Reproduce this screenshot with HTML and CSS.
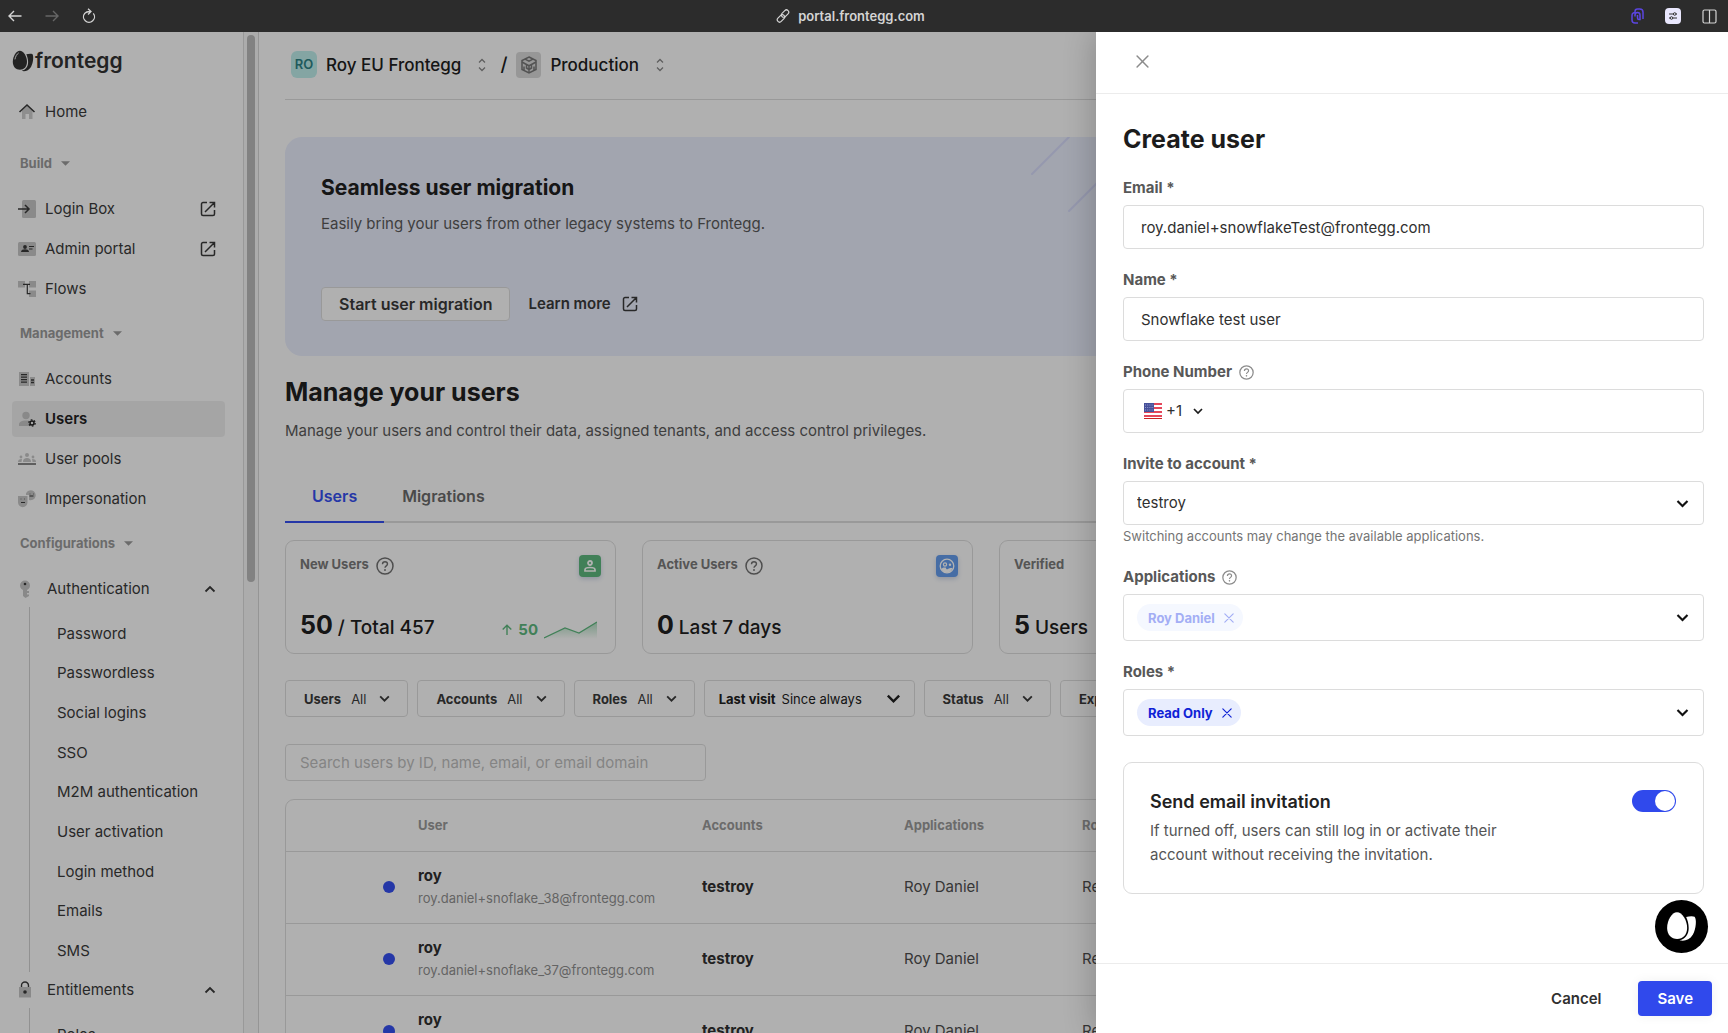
FILE: index.html
```html
<!DOCTYPE html>
<html lang="en">
<head>
<meta charset="utf-8">
<title>Create user - Frontegg portal</title>
<link rel="stylesheet" href="styles.css">
</head>
<body>
<svg class="sprite" aria-hidden="true">
  <symbol id="chev-down" viewBox="0 0 12 12"><path d="M2 4l4 4 4-4" fill="none" stroke="currentColor" stroke-width="1.700"/></symbol>
  <symbol id="chev-up" viewBox="0 0 12 12"><path d="M1.500 8.500l4.500-4.500 4.500 4.500" fill="none" stroke="currentColor" stroke-width="1.800"/></symbol>
  <symbol id="caret" viewBox="0 0 10 5"><path d="M0 0h10L5 5z" fill="currentColor"/></symbol>
  <symbol id="updown" viewBox="0 0 8 14"><path d="M1 4.500l3-3 3 3M1 9.500l3 3 3-3" fill="none" stroke="currentColor" stroke-width="1.300"/></symbol>
  <symbol id="close" viewBox="0 0 12 12"><path d="M1 1l10 10M11 1L1 11" fill="none" stroke="currentColor" stroke-width="1.400" stroke-linecap="round"/></symbol>
  <symbol id="external" viewBox="0 0 16 16"><path d="M7 1.500H3A1.500 1.500 0 0 0 1.500 3v10A1.500 1.500 0 0 0 3 14.500h10a1.500 1.500 0 0 0 1.500-1.500V9M9.500 1.500h5v5M14.500 1.500L5 11" fill="none" stroke="currentColor" stroke-width="1.500"/></symbol>
  <symbol id="help" viewBox="0 0 18 18"><circle cx="9" cy="9" r="8" fill="none" stroke="currentColor" stroke-width="1.500"/><path d="M6.500 7.200C6.500 5.700 7.600 4.700 9 4.700s2.500 1 2.500 2.300c0 1.800-2.500 1.900-2.500 3.800" fill="none" stroke="currentColor" stroke-width="1.400"/><circle cx="9" cy="13" r=".95" fill="currentColor"/></symbol>
  <symbol id="egg" viewBox="0 0 22 22"><path d="M7.800.800C11.500.800 15 6.500 15 11.800c0 5-3 8-7.100 8S.800 16.800.800 11.800C.800 6.500 4.200 .800 7.800.800z" fill="currentColor"/><path d="M14.300 4.300c1.900-.6 4.700-.9 6-.2 1.500 1.500 1.200 8.600-1.300 12.800-2.200 3.700-6.200 4.900-9.400 3.900 4.200-1 6.500-4.300 6.500-8.800 0-2.800-.8-5.500-1.800-7.700z" fill="currentColor"/><path class="egg-shine" d="M3 9c.5-2.600 1.800-4.900 3.400-5.900" fill="none" stroke-width=".9" stroke-linecap="round"/></symbol>
</svg>

<header class="topbar">
  <div class="topbar-left">
    <button class="bar-btn" type="button" aria-label="Back"><svg width="14" height="14" viewBox="0 0 14 14"><path d="M13.500 7H1M6 2L1 7l5 5" fill="none" stroke="currentColor" stroke-width="1.400"/></svg></button>
    <button class="bar-btn bar-off" type="button" aria-label="Forward"><svg width="14" height="14" viewBox="0 0 14 14"><path d="M.500 7H13M8 2l5 5-5 5" fill="none" stroke="currentColor" stroke-width="1.400"/></svg></button>
    <button class="bar-btn" type="button" aria-label="Reload"><svg width="14" height="16" viewBox="0 0 14 16"><path d="M2.700 5.300A5.500 5.500 0 1 0 11.300 5.300M2.700 5.300C3.800 4 5.200 3.400 8.500 3.500M6 .700l3 2.900-3 2.900" fill="none" stroke="currentColor" stroke-width="1.300"/></svg></button>
  </div>
  <div class="address">
    <svg width="14" height="14" viewBox="0 0 14 14"><g fill="none" stroke="currentColor" stroke-width="1.200"><rect x="4.800" y="2.300" width="8.500" height="4.600" rx="2.300" transform="rotate(-45 9 4.600)"/><rect x=".7" y="7.100" width="8.500" height="4.600" rx="2.300" transform="rotate(-45 5 9.400)"/></g></svg>
    <span>portal.frontegg.com</span>
  </div>
  <div class="topbar-right">
    <button class="bar-btn clip" type="button" aria-label="Clipboard extension"><svg width="13" height="16" viewBox="0 0 13 16"><path d="M4 4V3.500A2.500 2.500 0 0 1 6.500 1h2.300A3.200 3.200 0 0 1 12 4.200V11M4 8.500V7a2.500 2.500 0 0 1 5 0v4.500H8a1.500 1.500 0 0 1-1.500-1.500V7M4.500 4.500C2 4.500 1 5.500 1 7.500V12a3 3 0 0 0 3 3h3" fill="none" stroke="currentColor" stroke-width="1.500"/></svg></button>
    <button class="bar-btn tile" type="button" aria-label="Settings extension"><svg width="16" height="16" viewBox="0 0 16 16"><path d="M4 6h4M11 6h1M4 10h1M8 10h4" stroke="currentColor" stroke-width="1.200"/><circle cx="9.700" cy="6" r="1.300" fill="none" stroke="currentColor"/><circle cx="6.500" cy="10" r="1.300" fill="none" stroke="currentColor"/></svg></button>
    <button class="bar-btn" type="button" aria-label="Split view"><svg width="15" height="15" viewBox="0 0 15 15"><rect x="1" y="1" width="13" height="13" rx="1.500" fill="none" stroke="currentColor" stroke-width="1.200"/><path d="M7.500 1v13" stroke="currentColor" stroke-width="1.200"/></svg></button>
  </div>
</header>

<div class="stage">
  <div class="shell">
    <aside class="sidebar">
      <a class="logo" href="#"><svg width="22" height="22"><use href="#egg"/></svg><span>frontegg</span></a>
      <nav class="nav">
        <a class="nav-item" href="#"><svg class="ico" viewBox="0 0 18 18"><path d="M4 7.500L9 3l5.500 4.500V16H11v-5H7.500v5H4z" fill="#ccc"/><path d="M1.500 9L9 2l7.500 7" fill="none" stroke="#3a3a3a" stroke-width="1.600"/></svg><span>Home</span></a>
        <button class="nav-label nav-first" type="button">Build <svg width="9" height="5"><use href="#caret"/></svg></button>
        <a class="nav-item" href="#"><svg class="ico" viewBox="0 0 18 18"><rect x="4" y="0" width="14" height="18" rx="1.500" fill="#c6c6c6"/><path d="M0 9h10.500M7 5l4 4-4 4" fill="none" stroke="#3a3a3a" stroke-width="1.500"/></svg><span>Login Box</span><svg class="ext"><use href="#external"/></svg></a>
        <a class="nav-item" href="#"><svg class="ico" viewBox="0 0 18 18"><rect x="0" y="2" width="18" height="14" rx="1.500" fill="#c6c6c6"/><circle cx="7" cy="7" r="1.900" fill="#3a3a3a"/><path d="M3 12c0-2 2-2.700 4-2.700s4 .7 4 2.700zM11 6h5v1h-5zM11 8.500h3.500v1H11z" fill="#3a3a3a"/></svg><span>Admin portal</span><svg class="ext"><use href="#external"/></svg></a>
        <a class="nav-item" href="#"><svg class="ico" viewBox="0 0 18 18"><path d="M0 1h7v6.500H0zM11 1h7v6.500h-7zM11 10.500h7V17h-7z" fill="#c6c6c6"/><path d="M5 4.300h7M9.300 4.300v9.300H12.500" fill="none" stroke="#3a3a3a" stroke-width="1.200"/></svg><span>Flows</span></a>
        <button class="nav-label" type="button">Management <svg width="9" height="5"><use href="#caret"/></svg></button>
        <a class="nav-item" href="#"><svg class="ico" viewBox="0 0 18 18"><path d="M1 2h10v14H1zM12 7h5v9h-5z" fill="#c6c6c6"/><path d="M3 4.700h6M3 7.200h6M3 9.700h6M3 12.200h6M13 10h3M13 12.500h3" stroke="#3a3a3a" stroke-width="1.300"/></svg><span>Accounts</span></a>
        <a class="nav-item active" href="#" aria-current="page"><svg class="ico" viewBox="0 0 18 18"><circle cx="8" cy="5.500" r="3.700" fill="#c4c4c4"/><path d="M1 16v-1.500C1 12 4 10.600 8 10.600c1.500 0 2 .1 3 .4V16z" fill="#c4c4c4"/><circle cx="14" cy="13" r="2" fill="none" stroke="#222" stroke-width="1.500"/><circle cx="14" cy="13" r="3.200" fill="none" stroke="#222" stroke-width="1.200" stroke-dasharray="1.700 1.650"/></svg><span>Users</span></a>
        <a class="nav-item" href="#"><svg class="ico" viewBox="0 0 18 18"><circle cx="9" cy="5" r="2" fill="#c6c6c6"/><circle cx="3" cy="7" r="1.400" fill="#c6c6c6"/><circle cx="15" cy="7" r="1.400" fill="#c6c6c6"/><path d="M5 12c0-3 1.500-4 4-4s4 1 4 4zM0 12c0-2 1-3 4-3l-.5 3zM18 12c0-2-1-3-4-3l.5 3z" fill="#c6c6c6"/><path d="M0 14h18" stroke="#3a3a3a" stroke-width="1.200"/></svg><span>User pools</span></a>
        <a class="nav-item" href="#"><svg class="ico" viewBox="0 0 18 18"><path d="M0 6h9.500v6.500a4.700 4.700 0 0 1-9.500 0zM8 3.500a5 5 0 1 1 3 6.500V5H8z" fill="#c6c6c6"/><path d="M3 12.500h4M11.500 6h4" stroke="#3a3a3a" stroke-width="1.200"/><path d="M2.500 9h1M6 9h1M11.500 4h1M15 4h1" stroke="#777"/></svg><span>Impersonation</span></a>
        <button class="nav-label" type="button">Configurations <svg width="9" height="5"><use href="#caret"/></svg></button>
        <button class="nav-item nav-parent" type="button" aria-expanded="true"><svg class="ico ico-key" viewBox="0 0 18 18"><circle cx="9" cy="5.500" r="5" fill="#c4c4c4"/><path d="M7 9h4v2h2v2h-2v1.500h2v1.500L9.500 18 7 16z" fill="#c4c4c4"/><circle cx="9" cy="4" r="1.300" fill="#3a3a3a"/></svg><span>Authentication</span><svg class="fold"><use href="#chev-up"/></svg></button>
        <div class="sub">
          <a href="#">Password</a><a href="#">Passwordless</a><a href="#">Social logins</a><a href="#">SSO</a><a href="#">M2M authentication</a><a href="#">User activation</a><a href="#">Login method</a><a href="#">Emails</a><a href="#">SMS</a>
        </div>
        <button class="nav-item nav-parent" type="button" aria-expanded="true"><svg class="ico ico-key" viewBox="0 0 18 18"><path d="M3 6h12v10.500H3z" fill="#c4c4c4"/><path d="M5.500 6V4.500a3.500 3.500 0 0 1 7 0V6" fill="none" stroke="#3a3a3a" stroke-width="1.400"/><circle cx="9" cy="11" r="1.800" fill="#3a3a3a"/></svg><span>Entitlements</span><svg class="fold"><use href="#chev-up"/></svg></button>
        <div class="sub sub-short"><a href="#">Roles</a></div>
      </nav>
    </aside>
    <div class="track"><div class="thumb"></div></div>

    <main class="main">
      <div class="crumbs">
        <span class="badge">RO</span>
        <button class="crumb" type="button">Roy EU Frontegg <svg width="8" height="14"><use href="#updown"/></svg></button>
        <span class="slash">/</span>
        <span class="env"><svg width="18" height="18" viewBox="0 0 18 18"><g fill="none" stroke="#777" stroke-width="1.500"><path d="M9 1l7 3.500v9L9 17l-7-3.500v-9z"/><path d="M5 3.200l4 2 4-2M2 6l4.500 2.500v3.500L9 13.500V17M16 6l-4.500 2.500v3.500L9 13.500M6.500 8.500L9 9.700l2.500-1.200M4 10.500V15M14 10.500V15M9 10v3"/></g></svg></span>
        <button class="crumb" type="button">Production <svg width="8" height="14"><use href="#updown"/></svg></button>
      </div>

      <section class="banner">
        <svg class="streaks" width="140" height="80" viewBox="0 0 140 80"><path d="M1 37L38 0M38 74L112 0" stroke="#d6dafa" stroke-width="2" stroke-linecap="round"/></svg>
        <h2>Seamless user migration</h2>
        <p>Easily bring your users from other legacy systems to Frontegg.</p>
        <div class="banner-actions">
          <button class="btn-outline" type="button">Start user migration</button>
          <a class="learn" href="#">Learn more <svg width="16" height="16"><use href="#external"/></svg></a>
        </div>
      </section>

      <h1>Manage your users</h1>
      <p class="lead">Manage your users and control their data, assigned tenants, and access control privileges.</p>

      <div class="tabs" role="tablist">
        <button class="tab tab-on" type="button" role="tab" aria-selected="true">Users</button>
        <button class="tab" type="button" role="tab" aria-selected="false">Migrations</button>
      </div>

      <div class="stats">
        <article class="stat">
          <div class="stat-head"><span>New Users</span><svg class="help"><use href="#help"/></svg><span class="stat-ico green"><svg width="16" height="16" viewBox="0 0 16 16"><circle cx="8" cy="5" r="2" fill="none" stroke="#fff" stroke-width="1.800"/><path d="M3 13v-1.200c0-1.600 2-2.300 5-2.300s5 .7 5 2.300V13z" fill="none" stroke="#fff" stroke-width="1.700"/></svg></span></div>
          <div class="stat-value"><strong>50</strong><span>/ Total 457</span><span class="trend"><svg width="10" height="12" viewBox="0 0 10 12"><path d="M5 11V1.500M.700 5.500L5 1.200l4.300 4.300" fill="none" stroke="currentColor" stroke-width="1.400"/></svg>50<svg class="spark" width="53" height="18" viewBox="0 0 53 18"><defs><linearGradient id="fade" x1="0" y1="0" x2="0" y2="1"><stop offset="0" stop-color="#5eb87e" stop-opacity=".5"/><stop offset="1" stop-color="#5eb87e" stop-opacity="0"/></linearGradient></defs><path d="M0 17L21 7l14 5L53 1v17H0z" fill="url(#fade)"/><path d="M0 17L21 7l14 5L53 1" fill="none" stroke="#5eb87e" stroke-width="1.300"/></svg></span></div>
        </article>
        <article class="stat">
          <div class="stat-head"><span>Active Users</span><svg class="help"><use href="#help"/></svg><span class="stat-ico blue"><svg width="16" height="16" viewBox="0 0 16 16"><circle cx="8" cy="8" r="6.800" fill="none" stroke="#fff" stroke-width="1.300"/><circle cx="6" cy="6.500" r="1.600" fill="none" stroke="#fff" stroke-width="1.200"/><circle cx="11" cy="6.800" r="1.200" fill="#fff"/><path d="M2.500 11c1-1.300 2.500-1.600 4.500-1.300 0 1.500 1 2 2 1.300 1.300-1.100 3-1.200 4.500-1-.8 2.800-2.900 4.400-5.500 4.500C5.500 14.500 3.500 13.500 2.500 11z" fill="#fff"/></svg></span></div>
          <div class="stat-value"><strong>0</strong><span>Last 7 days</span></div>
        </article>
        <article class="stat">
          <div class="stat-head"><span>Verified</span></div>
          <div class="stat-value"><strong>5</strong><span>Users</span></div>
        </article>
      </div>

      <div class="filters">
        <button class="filter" type="button" aria-haspopup="listbox"><b>Users</b> All <svg><use href="#chev-down"/></svg></button>
        <button class="filter" type="button" aria-haspopup="listbox"><b>Accounts</b> All <svg><use href="#chev-down"/></svg></button>
        <button class="filter" type="button" aria-haspopup="listbox"><b>Roles</b> All <svg><use href="#chev-down"/></svg></button>
        <div class="filter filter-visit"><label for="visit">Last visit</label><select id="visit"><option>Since always</option></select><svg><use href="#chev-down"/></svg></div>
        <button class="filter" type="button" aria-haspopup="listbox"><b>Status</b> All <svg><use href="#chev-down"/></svg></button>
        <button class="filter" type="button" aria-haspopup="listbox"><b>Export</b></button>
      </div>

      <input class="search" type="search" aria-label="Search users" placeholder="Search users by ID, name, email, or email domain">

      <div class="table-wrap">
        <table>
          <colgroup><col class="c-dot"><col class="c-user"><col class="c-acc"><col class="c-app"><col></colgroup>
          <thead><tr><td></td><th scope="col">User</th><th scope="col">Accounts</th><th scope="col">Applications</th><th scope="col">Roles</th></tr></thead>
          <tbody>
            <tr><td><span class="dot"></span></td><td><b>roy</b><small>roy.daniel+snoflake_38@frontegg.com</small></td><td><b>testroy</b></td><td>Roy Daniel</td><td>Read Only</td></tr>
            <tr><td><span class="dot"></span></td><td><b>roy</b><small>roy.daniel+snoflake_37@frontegg.com</small></td><td><b>testroy</b></td><td>Roy Daniel</td><td>Read Only</td></tr>
            <tr><td><span class="dot"></span></td><td><b>roy</b><small></small></td><td><b>testroy</b></td><td>Roy Daniel</td><td>Read Only</td></tr>
          </tbody>
        </table>
      </div>
    </main>
  </div>

  <div class="scrim"></div>

  <form class="drawer" aria-labelledby="drawer-title">
    <div class="drawer-head"><button class="x-btn" type="button" aria-label="Close"><svg width="13" height="13"><use href="#close"/></svg></button></div>
    <div class="drawer-body">
      <h2 class="drawer-title" id="drawer-title">Create user</h2>

      <div class="field"><label for="email">Email *</label><input class="box box-text" id="email" type="email" value="roy.daniel+snowflakeTest@frontegg.com"></div>
      <div class="field"><label for="name">Name *</label><input class="box box-text" id="name" type="text" value="Snowflake test user"></div>
      <div class="field">
        <label for="phone">Phone Number <svg class="help-sm"><use href="#help"/></svg></label>
        <div class="box phone">
          <svg width="18" height="16" viewBox="0 0 18 16"><rect width="18" height="16" fill="#fff"/><path d="M0 1h18M0 5h18M0 9h18M0 13h18" stroke="#e4475a" stroke-width="2"/><path d="M0 15.500h18" stroke="#c22" stroke-width="1"/><rect width="10" height="9" fill="#46509a"/><path d="M1 2h9M1 4.500h9M1 7h9" stroke="#aab0dc" stroke-width=".8" stroke-dasharray="1 1.200"/></svg>
          <select aria-label="Country code"><option>+1</option></select><svg class="phone-chev"><use href="#chev-down"/></svg>
          <input id="phone" type="tel">
        </div>
      </div>
      <div class="field">
        <label for="account">Invite to account *</label>
        <div class="box pick"><select id="account"><option>testroy</option></select><svg class="chev"><use href="#chev-down"/></svg></div>
        <p class="hint">Switching accounts may change the available applications.</p>
      </div>
      <div class="field">
        <label for="apps">Applications <svg class="help-sm"><use href="#help"/></svg></label>
        <div class="box pick tall"><span class="chip chip-off">Roy Daniel <button type="button" aria-label="Remove Roy Daniel" disabled><svg width="10" height="10"><use href="#close"/></svg></button></span><button class="open" id="apps" type="button" aria-label="Open applications"><svg class="chev"><use href="#chev-down"/></svg></button></div>
      </div>
      <div class="field">
        <label for="roles">Roles *</label>
        <div class="box pick tall"><span class="chip">Read Only <button type="button" aria-label="Remove Read Only"><svg width="10" height="10"><use href="#close"/></svg></button></span><button class="open" id="roles" type="button" aria-label="Open roles"><svg class="chev"><use href="#chev-down"/></svg></button></div>
      </div>

      <div class="invite">
        <div class="invite-text"><label for="send">Send email invitation</label><p>If turned off, users can still log in or activate their account without receiving the invitation.</p></div>
        <input class="toggle" id="send" type="checkbox" role="switch" checked>
      </div>
    </div>
    <div class="drawer-foot"><button class="btn-text" type="button">Cancel</button><button class="btn-save" type="submit">Save</button></div>
    <button class="chat" type="button" aria-label="Open chat"><svg width="31" height="31"><use href="#egg"/></svg></button>
  </form>
</div>
</body>
</html>
```
FILE: styles.css
```css
* { box-sizing: border-box; }
body { margin: 0; height: 100vh; display: flex; flex-direction: column; overflow: hidden; background: #fdfdfd; color: #3a3a3a; font: 15px/24px Inter, "Liberation Sans", sans-serif; }
button, input, select { font: inherit; color: inherit; margin: 0; padding: 0; border: 0; background: none; outline: 0; }
select { appearance: none; }
a { color: inherit; text-decoration: none; }
h1, h2, p { margin: 0; }
svg { display: block; flex: none; }
.sprite { position: absolute; width: 0; height: 0; }

/* browser bar */
.topbar { flex: none; height: 32px; display: flex; align-items: center; padding: 0 11px 0 8px; background: #2c2c2c; color: #d4d4d4; }
.topbar-left, .topbar-right { flex: 1; display: flex; align-items: center; gap: 23px; }
.topbar-right { justify-content: flex-end; gap: 21px; }
.bar-btn { display: flex; }
.bar-off { color: #666; }
.clip { color: #5b45e0; }
.tile { background: #e9e7fd; color: #333; border-radius: 4px; }
.address { display: flex; align-items: center; gap: 8px; margin-right: 24px; font-size: 13px; font-weight: 600; }

.stage { position: relative; flex: 1; min-height: 0; overflow: hidden; }
.shell { height: 100%; display: flex; overflow: hidden; }
.scrim { position: absolute; inset: 0; background: rgba(0, 0, 0, .3); }

/* sidebar */
.sidebar { flex: none; width: 244px; padding: 18px 18px 0 12px; border-right: 1px solid #dcdcdc; overflow: hidden; }
.logo { display: flex; align-items: center; gap: 1px; height: 22px; margin-bottom: 22px; font-size: 21px; font-weight: 600; color: #333; }
.egg-shine { stroke: #fff; }
.nav { display: flex; flex-direction: column; }
.nav-item { display: flex; align-items: center; gap: 9px; height: 36px; padding: 0 9px 0 6px; border-radius: 4px; text-align: left; }
.nav-item + .nav-item { margin-top: 4px; }
.nav-item span { flex: 1; }
.ico { width: 18px; height: 18px; }
.ico-key { margin: 0 4px 0 -2px; }
.ext { width: 16px; height: 16px; }
.fold { width: 12px; height: 12px; }
.active { background: #ededed; font-weight: 600; color: #222; }
.nav-label { display: flex; align-items: center; gap: 9px; height: 20px; margin: 16px 0 18px 8px; font-size: 13px; font-weight: 700; color: #9a9a9a; }
.nav-first { margin-top: 23px; }
.sub { display: grid; grid-auto-rows: 1fr; align-items: center; min-height: 365px; margin: 0 0 0 17px; padding: 7px 0 1px 27px; border-left: 1px solid #d0d0d0; }
.sub-short { min-height: 47px; }
.track { flex: none; width: 15px; padding: 3px; border-right: 1px solid #d6d6d6; background: #f7f7f7; }
.thumb { width: 8px; height: 55%; border-radius: 4px; background: #bbb; }

/* main column */
.main { flex: 1; min-width: 0; padding: 0 41px 0 26px; overflow: hidden; }
.crumbs { display: flex; align-items: center; height: 68px; padding: 0 0 2px 6px; border-bottom: 1px solid #dcdcdc; color: #202020; font-size: 17px; font-weight: 500; }
.badge { width: 26px; height: 27px; margin-right: 9px; border-radius: 6px; background: #bdecea; color: #2d8285; font-size: 13px; font-weight: 600; line-height: 27px; text-align: center; }
.crumb { display: flex; align-items: center; gap: 17px; }
.crumb svg { color: #888; }
.slash { margin: 0 9px 0 14px; font-size: 19px; }
.env { display: flex; align-items: center; justify-content: center; width: 25px; height: 26px; margin-right: 9px; border-radius: 4px; background: #d8d8d8; }

.banner { position: relative; height: 219px; margin-top: 37px; padding: 37px 36px 0; border-radius: 17px; overflow: hidden; background: #e8ecfb; }
.banner h2 { font-size: 21px; line-height: 28px; font-weight: 700; color: #202020; }
.banner p { margin-top: 10px; color: #5a5a5a; }
.banner-actions { display: flex; align-items: center; gap: 18px; margin-top: 51px; font-weight: 600; }
.btn-outline { height: 34px; padding: 0 17px; border: 1px solid #dcdcdc; border-radius: 4px; background: #fdfdfd; font-size: 16px; }
.learn { display: flex; align-items: center; gap: 11px; }
.streaks { position: absolute; top: 0; left: 746px; }

h1 { margin-top: 20px; font-size: 25px; line-height: 32px; font-weight: 700; color: #202020; }
.lead { margin-top: 11px; color: #5a5a5a; }
.tabs { display: flex; margin-top: 28px; box-shadow: inset 0 -2px #dcdcdc; height: 52px; }
.tab { padding: 0 27px; border-bottom: 2px solid transparent; font-size: 16px; font-weight: 600; color: #6a6a6a; }
.tab + .tab { padding: 0 18px; }
.tab-on { border-color: #3650ef; color: #3650ef; }

.stats { display: grid; grid-template-columns: repeat(4, 1fr); gap: 26px; margin-top: 17px; }
.stat { display: flex; flex-direction: column; justify-content: space-between; height: 114px; padding: 14px 14px 9px; border: 1px solid #dcdcdc; border-radius: 9px; }
.stat-head { display: flex; align-items: center; gap: 7px; height: 22px; font-size: 13px; font-weight: 700; color: #7a7a7a; }
.stat-head > span:first-child { margin-bottom: 5px; }
.help { width: 18px; height: 18px; color: #707070; }
.stat-ico { display: flex; align-items: center; justify-content: center; width: 22px; height: 22px; margin-left: auto; border-radius: 4px; box-shadow: 0 2px 5px rgba(60, 90, 160, .25); }
.green { background: #5eb87e; }
.blue { background: #659ded; }
.stat-value { display: flex; align-items: baseline; gap: 5px; line-height: 32px; font-size: 19px; font-weight: 500; color: #202020; }
.stat-value strong { font-size: 25px; font-weight: 700; }
.trend { display: flex; align-items: center; align-self: flex-end; gap: 6px; margin: 0 4px 2px auto; font-size: 15px; line-height: 24px; font-weight: 700; color: #5eb87e; }

.filters { display: flex; gap: 9px; margin-top: 26px; }
.filter { display: flex; align-items: center; gap: 10px; height: 37px; padding: 0 16px 0 18px; border: 1px solid #dcdcdc; border-radius: 4px; font-size: 13px; white-space: nowrap; }
.filter b { font-weight: 700; }
.filter svg { width: 13px; height: 13px; margin-left: 2px; }
.filter-visit { gap: 6px; padding: 0 12px 0 14px; color: #202020; }
.filter-visit label { font-weight: 700; }
.filter-visit svg { width: 17px; height: 17px; margin-left: 16px; }
.search { display: block; width: 421px; height: 37px; margin-top: 27px; padding: 0 14px; border: 1px solid #dcdcdc; border-radius: 4px; }
.search::placeholder { color: #bebebe; opacity: 1; }

.table-wrap { margin-top: 18px; border: 1px solid #dcdcdc; border-radius: 9px; }
table { width: 100%; table-layout: fixed; border-collapse: collapse; color: #4e4e4e; }
.c-dot { width: 132px; }
.c-user { width: 284px; }
.c-acc { width: 202px; }
.c-app { width: 178px; }
th, td { padding: 0; text-align: left; border-bottom: 1px solid #dcdcdc; }
thead tr { height: 51px; }
th { font-size: 13px; font-weight: 700; color: #9a9a9a; }
tbody tr { height: 72px; }
td b { font-weight: 700; color: #303030; }
td b, td small { display: block; line-height: 22px; }
td small { min-height: 22px; font-size: 13px; color: #909090; }
.dot { display: block; width: 12px; height: 12px; margin-left: 97px; border-radius: 50%; background: #3650ef; }

/* create-user drawer */
.drawer { position: absolute; top: 0; right: 0; bottom: 0; width: 632px; display: flex; flex-direction: column; background: #fff; box-shadow: -4px 0 28px rgba(0, 0, 0, .2); }
.drawer-head { flex: none; height: 62px; padding: 23px 40px 0; border-bottom: 1px solid #ececec; }
.x-btn { display: flex; color: #8c8c8c; }
.drawer-body { flex: 1; min-height: 0; padding: 29px 24px 0 27px; }
.drawer-title { margin-bottom: 23px; font-size: 25px; line-height: 32px; font-weight: 700; color: #1c1c1c; }
.field { margin-bottom: 21px; }
.field label { display: flex; align-items: center; gap: 7px; height: 20px; margin-bottom: 7px; font-weight: 700; color: #585858; }
.help-sm { width: 15px; height: 15px; color: #8c8c8c; }
.box { display: flex; align-items: center; width: 100%; height: 44px; border: 1px solid #dcdcdc; border-radius: 4px; color: #303030; }
.box-text { padding: 0 17px; }
.phone { padding: 0 17px 0 20px; }
.phone select { width: 16px; margin: 0 8px 0 4px; }
.phone-chev { width: 12px; height: 12px; margin-left: 2px; color: #1c1c1c; }
.phone input { flex: 1; margin-left: 10px; }
.pick { padding: 0 13px; }
.pick select { flex: 1; }
.chev { width: 15px; height: 15px; color: #111; }
.tall { height: 47px; }
.hint { margin-top: 2px; font-size: 13px; line-height: 19px; color: #757575; }
.chip { display: flex; align-items: center; gap: 9px; height: 27px; padding: 0 9px 0 11px; border-radius: 14px; background: #e8edfe; color: #0f22d6; font-size: 13px; font-weight: 700; }
.chip-off { background: #f5f8ff; color: #a3aef5; }
.chip button, .open { display: flex; }
.open { margin-left: auto; }
.invite { display: flex; justify-content: space-between; align-items: flex-start; margin-top: 26px; padding: 27px 27px 26px 26px; border: 1px solid #dcdcdc; border-radius: 9px; }
.invite label { font-size: 18px; font-weight: 600; color: #222; }
.invite-text { width: 384px; }
.invite p { margin-top: 4px; color: #555; }
.toggle { appearance: none; display: flex; justify-content: flex-end; width: 44px; height: 22px; padding: 1px; border-radius: 11px; background: #3049ec; }
.toggle::before { content: ""; width: 20px; height: 20px; border-radius: 50%; background: #fff; }
.drawer-foot { flex: none; display: flex; justify-content: flex-end; gap: 18px; padding: 17px 16px; border-top: 1px solid #ececec; font-weight: 600; }
.drawer-foot button { height: 35px; padding: 0 19px; border-radius: 4px; }
.btn-text { color: #303030; }
.btn-save { background: #3049ec; color: #fff; box-shadow: 0 0 12px rgba(0, 0, 0, .06); }
.chat { position: absolute; right: 20px; bottom: 80px; display: flex; align-items: center; justify-content: center; width: 53px; height: 53px; border-radius: 50%; background: #000; color: #fff; }
.chat .egg-shine { stroke: #000; }
```
